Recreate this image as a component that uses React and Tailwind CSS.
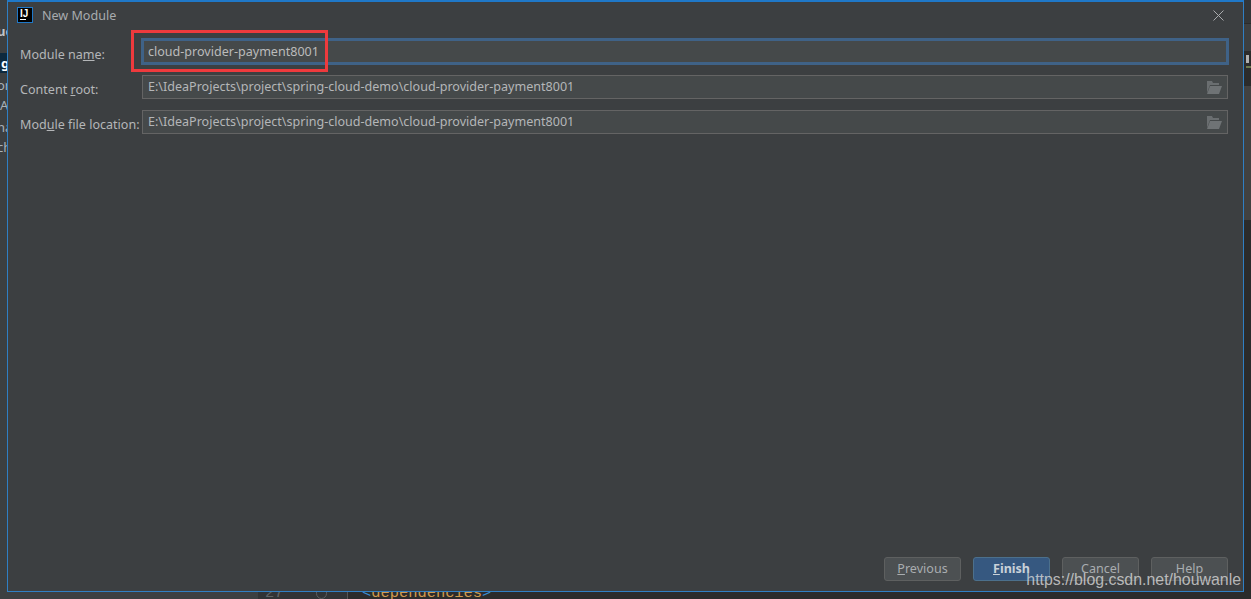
import React from 'react'

const uiFont = 'font-["Noto_Sans",sans-serif]'

const FolderIcon = () => (
  <svg width="16" height="13" viewBox="0 0 16 13" className="shrink-0">
    <path d="M1 0h5l1 2h6v2H4L1 12z" fill="#6a6e70" />
    <path d="M4 5h12l-3 8H1z" fill="#6f7375" />
  </svg>
)

const Field = ({ value, focused }) => (
  <div
    className={
      focused
        ? 'flex flex-1 items-center h-[27px] -mt-[2px] -mb-px -mx-px bg-[#45494a] border-[3px] border-[#3f6287] pl-[4px] pt-[2px] text-[#bbbbbb]'
        : 'flex flex-1 items-center justify-between h-[24px] bg-[#45494a] border border-[#646464] pl-[5px] pr-[5px] text-[#b4b6b8]'
    }
  >
    <span className="whitespace-nowrap">{value}</span>
    {!focused && <FolderIcon />}
  </div>
)

const Row = ({ label, value, focused }) => (
  <div className="flex items-center h-[24px]">
    <div className="w-[122px] text-[#b4b6b8] whitespace-nowrap pt-[6px]">{label}</div>
    <Field value={value} focused={focused} />
  </div>
)

const Button = ({ children, primary }) => (
  <div
    className={
      primary
        ? 'w-[77px] h-[24px] flex items-center justify-center rounded-[3px] bg-[#365880] border border-[#4c708c] text-[#c9d1d9] font-bold'
        : 'w-[77px] h-[24px] flex items-center justify-center rounded-[3px] bg-[#4c5052] border border-[#5e6060] text-[#a9adb0]'
    }
  >
    <span>{children}</span>
  </div>
)

export default function App() {
  const path = 'E:\\IdeaProjects\\project\\spring-cloud-demo\\cloud-provider-payment8001'

  return (
    <div className={`relative w-[1251px] h-[599px] overflow-hidden bg-[#2b2b2b] text-[12.55px] ${uiFont}`}>
      {/* IDE behind the dialog */}
      <div className="flex h-full">
        <div className="w-[258px] bg-[#3c3f41] text-[#a9b1b8] text-[13px] leading-[20px] pt-[21px]">
          <div className="h-[32px] -ml-[3px] font-bold text-[#c0c4c8] whitespace-nowrap">ue</div>
          <div className="h-[20px] bg-[#0d293e] text-white font-bold pl-px">g</div>
          <div className="h-[20px] mt-[2px] -ml-[3px]">or</div>
          <div className="h-[20px]">A</div>
          <div className="h-[20px] mt-[2px] -ml-[3px]">na</div>
          <div className="h-[20px] -ml-[3px]">ch</div>
        </div>
        <div className="flex-1 flex flex-col justify-end">
          <div className="flex items-center h-[16px] -mb-[2px] bg-[#313335] font-['Liberation_Mono',monospace] text-[15.4px] leading-[16px]">
            <span className="ml-[7px] w-[51px] text-[#606366]">27</span>
            <div className="w-[11px] h-[11px] rounded-b-full border border-[#5a5d5f]" />
            <div className="ml-[20px] w-px h-full bg-[#555555]" />
            <div className="flex-1 bg-[#2b2b2b] h-full pl-[14px] text-[#cf9a4e]">
              <span className="text-[#3b8dd0]">&lt;</span>dependencies<span className="text-[#3b8dd0]">&gt;</span>
            </div>
          </div>
        </div>
      </div>

      {/* right edge of the IDE */}
      <div className="absolute top-0 right-0 w-[7px] h-full flex flex-col bg-[#2b2b2b]">
        <div className="h-[24px] bg-[#333638] border-b border-[#2b2b2b]" />
        <div className="h-[27px] bg-[#3c3f41]" />
        <div className="relative h-[35px] bg-[#2b2b2b]">
          <div className="absolute left-[2px] top-[4px] w-[3px] h-[8px] bg-[#b0b0b0]" />
          <div className="absolute left-[2px] top-[15px] w-[5px] h-[2px] bg-[#6b7a4e]" />
        </div>
        <div className="h-[134px] bg-[#414141]" />
      </div>

      {/* dialog */}
      <div className="absolute left-[7px] top-0 w-[1237px] h-[592px] flex flex-col bg-[#3c3f41] border border-[#2f7fc4] border-t-2 border-t-[#1f78c8]">
        <div className="flex items-center justify-between h-[26px] pl-[9px] pr-[19px]">
          <div className="flex items-center gap-[9px]">
            <div className="w-[16px] h-[16px] bg-black border border-[#1f78c8] flex flex-col text-white font-bold text-[10px] leading-[9px] font-['Liberation_Sans',sans-serif] pl-[2px] pt-px">
              <span>IJ</span>
              <div className="w-[6px] h-px bg-white mt-px" />
            </div>
            <span className="text-[#a8acaf] pt-[2px]">New Module</span>
          </div>
          <svg width="11" height="11" viewBox="0 0 11 11" className="mt-px">
            <path d="M0.5 0.5l10 10M10.5 0.5l-10 10" stroke="#a9abad" strokeWidth="1" fill="none" />
          </svg>
        </div>

        <div className="flex flex-col gap-[11px] pl-[12px] pr-[15px] mt-[12px]">
          <Row label={<>Module na<u>m</u>e:</>} value="cloud-provider-payment8001" focused />
          <Row label={<>Content <u>r</u>oot:</>} value={path} />
          <Row label={<>Mod<u>u</u>le file location:</>} value={path} />
        </div>

        <div className="flex-1" />

        <div className="flex justify-end gap-[12px] pr-[15px] pb-[10px]">
          <Button><u>P</u>revious</Button>
          <Button primary><u>F</u>inish</Button>
          <Button>Cancel</Button>
          <Button>Help</Button>
        </div>

        {/* red annotation box */}
        <div className="absolute left-[123px] top-[28px] w-[197px] h-[42px] border-[3px] border-[#ee3a3d]" />
      </div>

      {/* watermark */}
      <div className="absolute right-[10px] top-[570px] text-[15.9px] leading-[20px] text-[#d8d8d8]/80 font-['Liberation_Sans',sans-serif] whitespace-nowrap">
        https://blog.csdn.net/houwanle
      </div>
    </div>
  )
}
